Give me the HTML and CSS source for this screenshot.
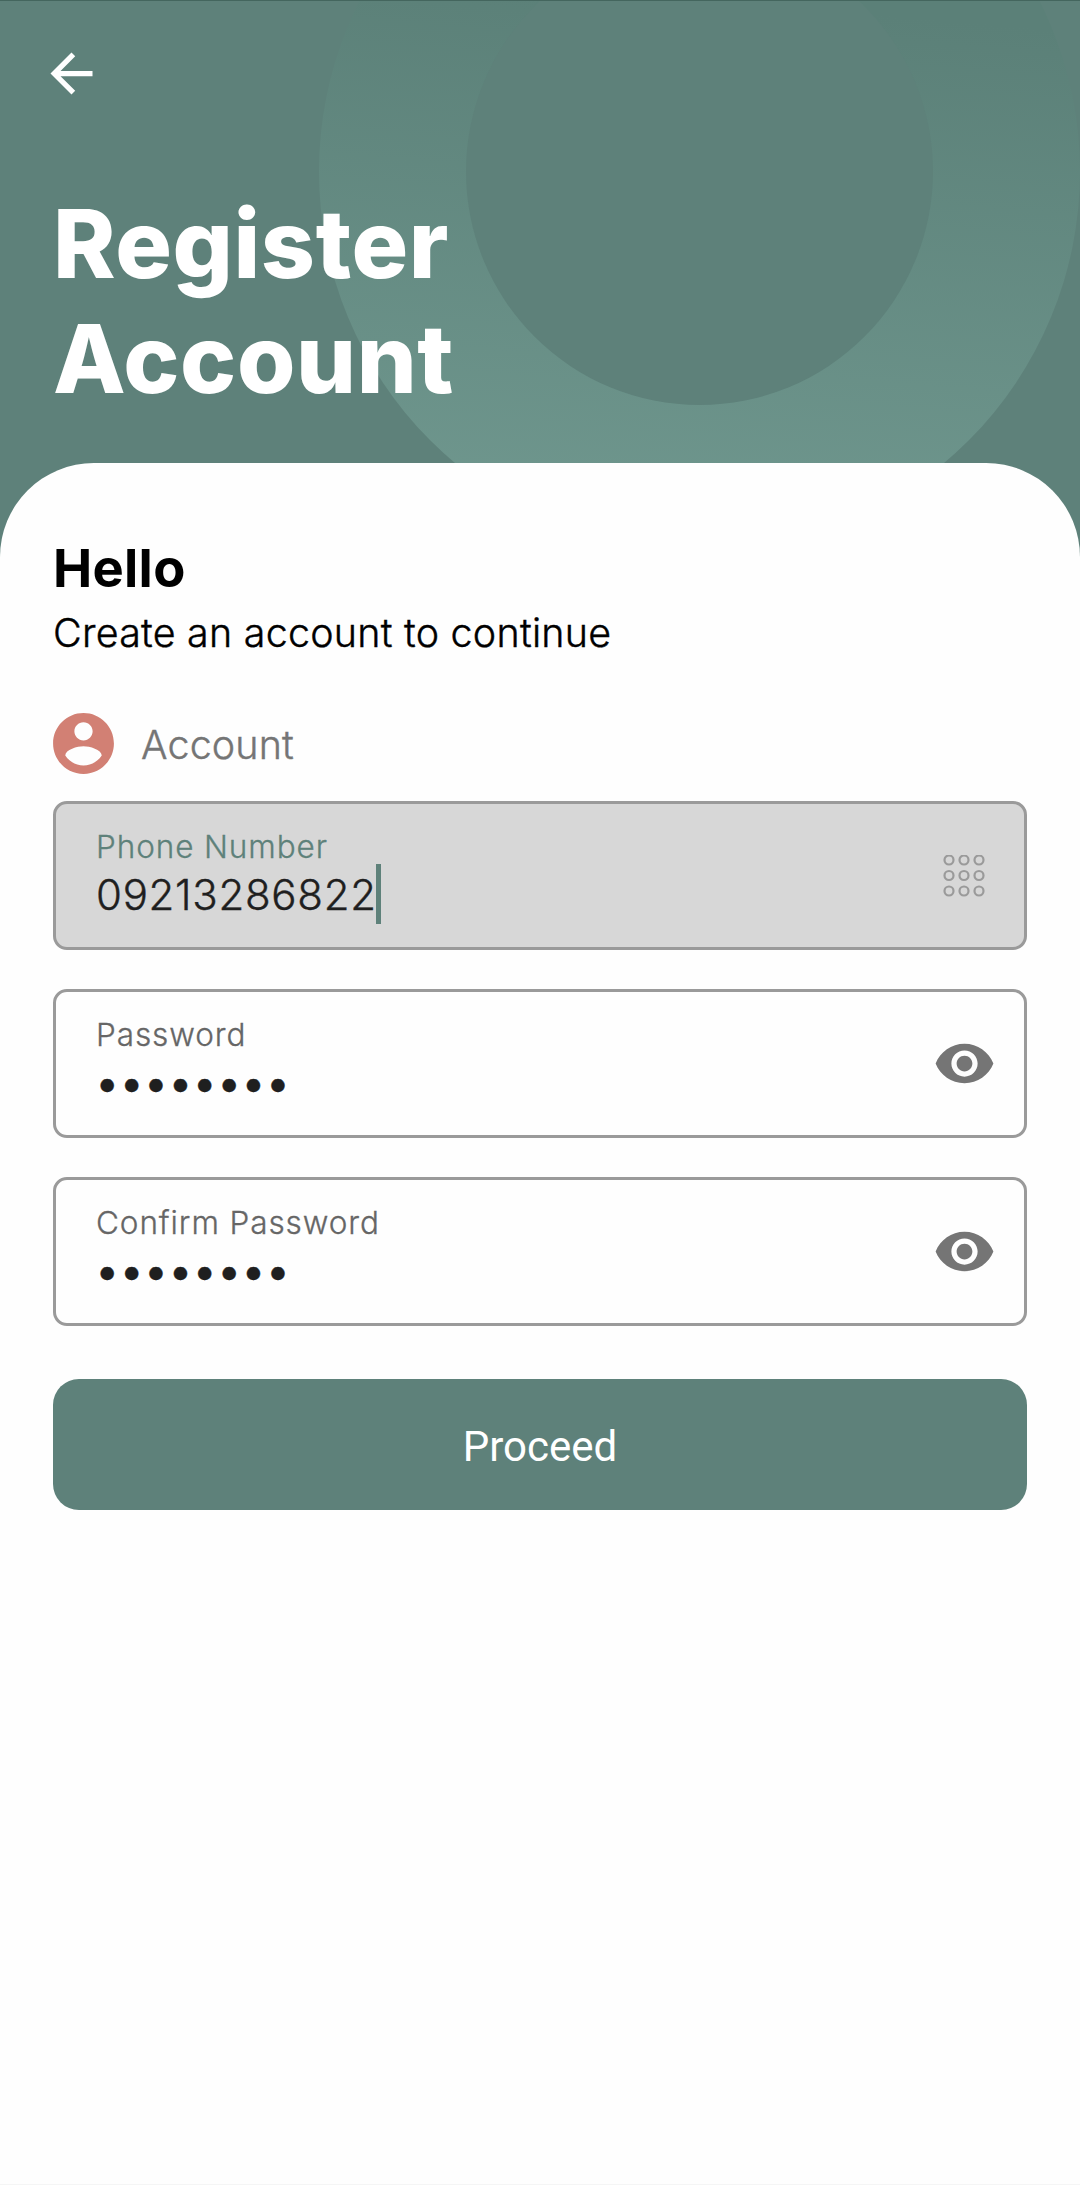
FILE: index.html
```html
<!DOCTYPE html>
<html lang="en">
<head>
  <meta charset="UTF-8">
  <title>Register Account</title>
  <link rel="stylesheet" href="styles.css">
</head>
<body>
  <div class="screen">
    <header>
      <svg class="ring" viewBox="0 0 761 761">
        <defs>
          <linearGradient id="ring-fill" x1="0.56" y1="0.28" x2="0.5" y2="1">
            <stop offset="0" stop-color="#5B8078"/>
            <stop offset="1" stop-color="#70988F"/>
          </linearGradient>
        </defs>
        <circle cx="380.5" cy="380.5" r="380.5" fill="url(#ring-fill)"/>
        <circle cx="380.5" cy="380.5" r="233.5" fill="#5E817A"/>
      </svg>
      <svg class="back" viewBox="0 0 24 24"><path d="M20 11H7.83l5.59-5.59L12 4l-8 8 8 8 1.41-1.41L7.83 13H20v-2z"/></svg>
      <h1>Register<br>Account</h1>
    </header>

    <main>
      <h2>Hello</h2>
      <p class="subtitle">Create an account to continue</p>

      <div class="section">
        <svg class="avatar" viewBox="0 0 24 24"><path d="M12 2C6.48 2 2 6.48 2 12s4.48 10 10 10 10-4.48 10-10S17.52 2 12 2zm0 3c1.66 0 3 1.34 3 3s-1.34 3-3 3-3-1.34-3-3 1.34-3 3-3zm0 14.2c-2.5 0-4.71-1.28-6-3.22.03-1.99 4-3.08 6-3.08 1.99 0 5.97 1.09 6 3.08-1.29 1.94-3.5 3.22-6 3.22z"/></svg>
        <span>Account</span>
      </div>

      <div class="field active">
        <div class="text">
          <label>Phone Number</label>
          <div class="value">09213286822<span class="caret"></span></div>
        </div>
        <svg class="keypad" viewBox="0 0 42 42">
          <circle cx="6" cy="5" r="4.5"/><circle cx="21" cy="5" r="4.5"/><circle cx="36" cy="5" r="4.5"/>
          <circle cx="6" cy="20.5" r="4.5"/><circle cx="21" cy="20.5" r="4.5"/><circle cx="36" cy="20.5" r="4.5"/>
          <circle cx="6" cy="36" r="4.5"/><circle cx="21" cy="36" r="4.5"/><circle cx="36" cy="36" r="4.5"/>
        </svg>
      </div>

      <div class="field">
        <div class="text">
          <label>Password</label>
          <div class="value dots">••••••••</div>
        </div>
        <svg class="eye" viewBox="0 0 24 24"><path d="M12 4.5C7 4.5 2.73 7.61 1 12c1.73 4.39 6 7.5 11 7.5s9.27-3.11 11-7.5c-1.73-4.39-6-7.5-11-7.5zM12 17c-2.76 0-5-2.24-5-5s2.24-5 5-5 5 2.24 5 5-2.24 5-5 5zm0-8c-1.66 0-3 1.34-3 3s1.34 3 3 3 3-1.34 3-3-1.34-3-3-3z"/></svg>
      </div>

      <div class="field">
        <div class="text">
          <label>Confirm Password</label>
          <div class="value dots">••••••••</div>
        </div>
        <svg class="eye" viewBox="0 0 24 24"><path d="M12 4.5C7 4.5 2.73 7.61 1 12c1.73 4.39 6 7.5 11 7.5s9.27-3.11 11-7.5c-1.73-4.39-6-7.5-11-7.5zM12 17c-2.76 0-5-2.24-5-5s2.24-5 5-5 5 2.24 5 5-2.24 5-5 5zm0-8c-1.66 0-3 1.34-3 3s1.34 3 3 3 3-1.34 3-3-1.34-3-3-3z"/></svg>
      </div>

      <button>Proceed</button>
    </main>
  </div>
</body>
</html>
```

FILE: styles.css
```css
* {
  box-sizing: border-box;
}
body {
  margin: 0;
  font-family: Inter, sans-serif;
  background: #FEFEFE;
}
.screen {
  display: flex;
  flex-direction: column;
  height: 2185px;
  overflow: hidden;
  background: #5E817A;
  border-top: 1px solid #44665E;
}

/* green header with the ring behind the title */
header {
  position: relative;
  height: 462px;
  padding: 41px 53px 0;
}
.ring {
  position: absolute;
  left: 319px;
  top: -210px;
  width: 761px;
  height: 761px;
}
.back {
  position: relative;
  display: block;
  width: 63px;
  height: 63px;
  margin-left: -13px;
  fill: #FFFFFF;
}
h1 {
  position: relative;
  margin: 81px 0 0;
  font-size: 94.5px;
  line-height: 115px;
  font-weight: 800;
  letter-spacing: 0.6px;
  color: #FFFFFF;
}

/* white card */
main {
  position: relative;
  flex: 1;
  padding: 74px 53px 0;
  background: #FEFEFE;
  border-radius: 94px 94px 0 0;
  border-bottom: 1px solid #F5F5F5;
}
h2 {
  margin: 0;
  font-size: 52.5px;
  line-height: 63px;
  font-weight: 700;
  letter-spacing: 0.3px;
  color: #000000;
}
.subtitle {
  margin: 9px 0 0;
  font-size: 39.4px;
  line-height: 48px;
  font-weight: 300;
  letter-spacing: 0.25px;
  -webkit-text-stroke: 0.4px;
  color: #000000;
}
.section {
  display: flex;
  align-items: center;
  height: 74px;
  margin: 49px 0 21px -6px;
  gap: 21px;
  font-size: 39.4px;
  font-weight: 300;
  color: #757575;
  letter-spacing: 0.15px;
  -webkit-text-stroke: 0.4px;
}
.section span {
  padding-top: 4px;
}
.avatar {
  width: 73px;
  height: 73px;
  fill: #D28074;
}

/* form fields */
.field {
  display: flex;
  align-items: center;
  justify-content: space-between;
  height: 149px;
  margin-bottom: 39px;
  padding: 0 31px 0 40px;
  border: 3px solid #9A9A9A;
  border-radius: 14px;
}
.field.active {
  background: #D7D7D7;
}
.field label {
  display: block;
  padding-top: 1px;
  font-size: 31.5px;
  line-height: 38px;
  font-weight: 300;
  letter-spacing: 0.9px;
  -webkit-text-stroke: 0.3px;
  color: #666666;
}
.field.active label {
  color: #5E817A;
}
.value {
  display: flex;
  align-items: center;
  height: 60px;
  margin-top: -1px;
  font-size: 42px;
  font-weight: 300;
  letter-spacing: 0.7px;
  -webkit-text-stroke: 0.4px;
  color: #1F1F1F;
}
.dots {
  font-weight: 500;
  letter-spacing: 2px;
}
.caret {
  width: 5px;
  height: 60px;
  margin: -2px 0 0 -1px;
  background: #5E817A;
}
.keypad {
  width: 42px;
  height: 42px;
  margin-right: 8px;
  fill: none;
  stroke: #9A9A9A;
  stroke-width: 2.2;
}
.eye {
  width: 63px;
  height: 63px;
  margin-right: -3px;
  fill: #757575;
}

button {
  display: block;
  width: 100%;
  height: 131px;
  margin-top: 53px;
  padding: 4px 0 0;
  border: none;
  border-radius: 26px;
  background: #5E817A;
  color: #FFFFFF;
  font-family: Roboto, sans-serif;
  font-size: 42px;
}
```
